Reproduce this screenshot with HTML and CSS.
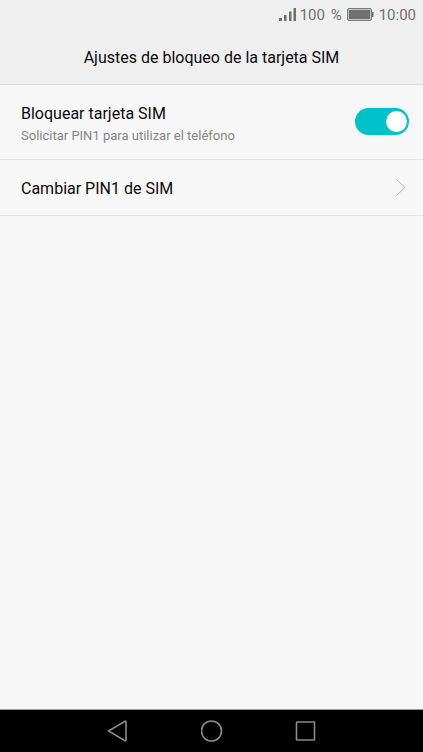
FILE: index.html
```html
<!DOCTYPE html>
<html lang="es">
<head>
<meta charset="utf-8">
<meta name="viewport" content="width=device-width, initial-scale=1">
<title>Ajustes de bloqueo de la tarjeta SIM</title>
<link rel="stylesheet" href="styles.css">
</head>
<body>
<div class="status">
  <svg class="signal" width="18" height="14" viewBox="0 0 18 14" aria-hidden="true">
    <path d="M0 10h3v3H0zM5 7h2.5v6H5zM10 3.5h2.5V13H10zM14.5 0h2.5v13h-2.5z"/>
  </svg>
  <span class="percent">100 <span class="sign">%</span></span>
  <svg class="battery" width="27" height="14" viewBox="0 0 27 14" aria-hidden="true">
    <rect class="shell" x="0.5" y="0.5" width="24" height="12" rx="1.5"/>
    <path d="M2 2h21v9H2zM25 4h1.5v5H25z"/>
  </svg>
  <time>10:00</time>
</div>
<header class="header"><h1>Ajustes de bloqueo de la tarjeta SIM</h1></header>
<main class="list">
  <div class="row row-tall">
    <label class="text" for="lock">
      <span class="name">Bloquear tarjeta SIM</span>
      <span class="hint">Solicitar PIN1 para utilizar el teléfono</span>
    </label>
    <input class="switch" type="checkbox" role="switch" id="lock" checked>
  </div>
  <a class="row" href="#pin">
    <span class="name">Cambiar PIN1 de SIM</span>
    <svg class="chevron" width="10" height="18" viewBox="0 0 10 18" aria-hidden="true"><path d="M0.5 0.5L9 8.5L0.5 16.5"/></svg>
  </a>
</main>
<nav class="nav">
  <button type="button" aria-label="Atrás"><svg width="22" height="22" viewBox="0 0 22 22"><path d="M1.5 11L18 1.2Q19 1 19 2V20Q19 21 18 20.8Z"/></svg></button>
  <button type="button" aria-label="Inicio"><svg width="22" height="22" viewBox="0 0 22 22"><circle cx="10.5" cy="11" r="10"/></svg></button>
  <button type="button" aria-label="Recientes"><svg width="22" height="22" viewBox="0 0 22 22"><rect x="1.5" y="2" width="18" height="18" rx="0.5"/></svg></button>
</nav>
</body>
</html>
```
FILE: styles.css
```css
* { box-sizing: border-box; }
body {
  margin: 0;
  min-height: 100vh;
  display: flex;
  flex-direction: column;
  background: #f7f7f7;
  color: #0b0b0b;
  font-family: Roboto, sans-serif;
}
.status {
  display: flex;
  align-items: center;
  justify-content: flex-end;
  height: 30px;
  padding-right: 7px;
  background: #efefef;
  color: #707070;
  font-size: 15px;
  line-height: 20px;
}
.status svg { fill: #707070; }
.signal { margin-right: 3px; }
.sign { margin-left: 2px; }
.battery { margin: 0 5px; }
.battery .shell { fill: #c4c4c4; stroke: #7c7c7c; }
.header {
  height: 55px;
  display: flex;
  align-items: center;
  justify-content: center;
  background: #efefef;
  border-bottom: 1px solid #dadada;
}
h1 { margin: 0; padding-top: 2px; font-size: 16px; line-height: 22px; font-weight: 400; }
.list { flex: 1; }
.row {
  display: flex;
  align-items: center;
  justify-content: space-between;
  height: 56px;
  padding: 0 14px 0 21px;
  border-bottom: 1px solid #e3e3e3;
  color: inherit;
  text-decoration: none;
}
.row-tall { height: 75px; padding-bottom: 1px; }
.name { padding-top: 2px; font-size: 16px; line-height: 22px; }
.text { padding-top: 4px; }
.text .name, .hint { display: block; }
.hint { padding-top: 1px; color: #868686; font-size: 13px; line-height: 20px; }
.switch {
  appearance: none;
  display: flex;
  justify-content: flex-end;
  width: 54px;
  height: 27px;
  margin: 0;
  padding: 3px 2px;
  border-radius: 14px;
  background: #00c1c9;
}
.switch::before {
  content: "";
  width: 21px;
  height: 21px;
  border-radius: 50%;
  background: #fff;
}
.switch:not(:checked) { justify-content: flex-start; background: #bbb; }
.chevron { margin-right: 3px; fill: none; stroke: #b4b4b4; }
.nav {
  display: flex;
  justify-content: center;
  gap: 50px;
  height: 43px;
  border-top: 1px solid #999;
  background: #000;
}
.nav button {
  display: flex;
  align-items: center;
  justify-content: center;
  width: 44px;
  padding: 0;
  border: 0;
  background: none;
}
.nav svg { fill: none; stroke: #8a8a8a; stroke-width: 1.6; }
```
